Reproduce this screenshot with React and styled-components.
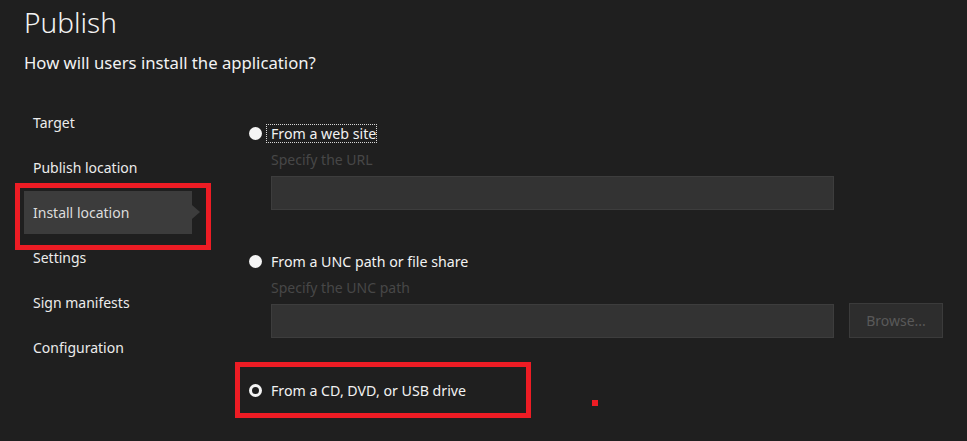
import styled, { createGlobalStyle } from 'styled-components'

const GlobalStyle = createGlobalStyle`
  html, body {
    margin: 0;
    background-color: #1f1f1f;
  }
  body {
    color: #f2f2f2;
    font-family: 'Noto Sans', 'Open Sans', 'DejaVu Sans', sans-serif;
  }
`
const Page = styled.div`
  height: 441px;
  overflow: hidden;
  padding-left: 24px;
  position: relative;
`
const Title = styled.h1`
  font-size: 28px;
  font-weight: 300;
  line-height: 40px;
  margin: 2px 0 0;
`
const Subtitle = styled.div`
  font-size: 16.7px;
  line-height: 24px;
  margin-top: 9px;
`
const Main = styled.div`
  display: flex;
  margin-top: 26px;
`
const Nav = styled.nav`
  display: flex;
  flex-direction: column;
  gap: 2px;
  width: 168px;
`
const NavItem = styled.div`
  align-items: center;
  background-color: ${(p) => (p.$active ? '#3c3c3c' : 'transparent')};
  color: ${(p) => (p.$active ? '#dcdcdc' : '#ececec')};
  display: flex;
  font-size: 14px;
  height: 43px;
  padding-left: 9px;
  position: relative;
  &::before {
    border-bottom: 7px solid transparent;
    border-left: 8px solid #3c3c3c;
    border-top: 7px solid transparent;
    content: '';
    display: ${(p) => (p.$active ? 'block' : 'none')};
    position: absolute;
    right: -8px;
    top: 14px;
  }
  &::after {
    border: 5px solid #ed1c24;
    bottom: -16px;
    content: '';
    display: ${(p) => (p.$marked ? 'block' : 'none')};
    left: -9px;
    position: absolute;
    right: -19px;
    top: -8px;
  }
`
const Content = styled.div`
  display: flex;
  flex-direction: column;
  margin-left: 57px;
  padding-top: 22px;
`
const Option = styled.label`
  align-items: center;
  align-self: flex-start;
  display: flex;
  height: 20px;
  margin-top: ${(p) => p.$top || 0}px;
  position: relative;
  &::after {
    border: 5px solid #ed1c24;
    content: '';
    display: ${(p) => (p.$marked ? 'block' : 'none')};
    height: 46px;
    left: -14px;
    position: absolute;
    top: -18px;
    width: 286px;
  }
`
const Radio = styled.span`
  background-color: #f4f4f4;
  border-radius: 50%;
  box-sizing: border-box;
  height: 13px;
  width: 13px;
  ${(p) => p.$checked && `
    background-color: #1f1f1f;
    border: 3.5px solid #f4f4f4;
  `}
`
const OptionText = styled.span`
  border: 1px dotted ${(p) => (p.$focus ? '#d8d8d8' : 'transparent')};
  font-size: 14.2px;
  line-height: 17px;
  margin-left: 4px;
  padding-left: 4px;
`
const Hint = styled.div`
  color: #474747;
  font-size: 14px;
  line-height: 20px;
  margin: 7px 0 0 22px;
`
const FieldRow = styled.div`
  display: flex;
  gap: 15px;
  margin: 6px 0 0 22px;
`
const TextBox = styled.div`
  background-color: #333333;
  border: 1px solid #3d3d3d;
  box-sizing: border-box;
  height: 34px;
  width: 563px;
`
const Button = styled.div`
  align-items: center;
  background-color: #2d2d2d;
  border: 1px solid #3b3b3b;
  box-sizing: border-box;
  color: #595959;
  display: flex;
  font-size: 14px;
  height: 35px;
  justify-content: center;
  margin-top: -1px;
  width: 94px;
`
const Dot = styled.div`
  background-color: #ed1c24;
  height: 6px;
  left: 592px;
  position: absolute;
  top: 400px;
  width: 6px;
`

const navItems = ['Target', 'Publish location', 'Install location', 'Settings', 'Sign manifests', 'Configuration']

export default function App() {
  return (
    <>
      <GlobalStyle />
      <Page>
        <Title>Publish</Title>
        <Subtitle>How will users install the application?</Subtitle>
        <Main>
          <Nav>
            {navItems.map((item) => (
              <NavItem key={item} $active={item === 'Install location'} $marked={item === 'Install location'}>
                {item}
              </NavItem>
            ))}
          </Nav>
          <Content>
            <Option>
              <Radio />
              <OptionText $focus>From a web site</OptionText>
            </Option>
            <Hint>Specify the URL</Hint>
            <FieldRow>
              <TextBox />
            </FieldRow>
            <Option $top={41}>
              <Radio />
              <OptionText>From a UNC path or file share</OptionText>
            </Option>
            <Hint>Specify the UNC path</Hint>
            <FieldRow>
              <TextBox />
              <Button>Browse...</Button>
            </FieldRow>
            <Option $top={42} $marked>
              <Radio $checked />
              <OptionText>From a CD, DVD, or USB drive</OptionText>
            </Option>
          </Content>
        </Main>
        <Dot />
      </Page>
    </>
  )
}
